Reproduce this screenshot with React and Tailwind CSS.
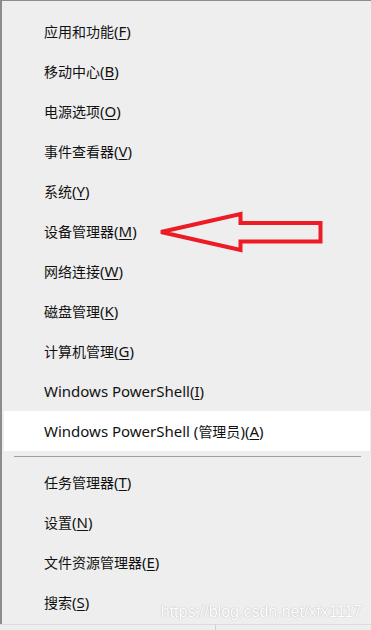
const groups = [
  [
    ['应用和功能', 'F'],
    ['移动中心', 'B'],
    ['电源选项', 'O'],
    ['事件查看器', 'V'],
    ['系统', 'Y'],
    ['设备管理器', 'M'],
    ['网络连接', 'W'],
    ['磁盘管理', 'K'],
    ['计算机管理', 'G'],
    ['Windows PowerShell', 'I'],
    ['Windows PowerShell (管理员)', 'A', true],
  ],
  [
    ['任务管理器', 'T'],
    ['设置', 'N'],
    ['文件资源管理器', 'E'],
    ['搜索', 'S'],
  ],
]

// CJK runs stay at 14px, latin runs are drawn a bit larger like Segoe UI
function Label({ text }) {
  return text.split(/([\u4e00-\u9fff]+)/).filter(Boolean).map((part, i) =>
    /[\u4e00-\u9fff]/.test(part)
      ? <span key={i} className="text-[14px]">{part}</span>
      : <span key={i} className="text-[15px]">{part}</span>
  )
}

function MenuItem({ label, hotkey, active }) {
  return (
    <div className={`h-10 flex items-center pl-10 mr-px ${active ? 'bg-white' : ''}`}>
      <span>
        <Label text={label} />
        <span className="text-[15px]">(<span className="underline underline-offset-2 decoration-1">{hotkey}</span>)</span>
      </span>
    </div>
  )
}

export default function App() {
  return (
    <div
      className="relative w-[371px] h-[630px] overflow-hidden bg-[#eeeeee] text-[#111] text-[14px]"
      style={{ fontFamily: '"Noto Sans", "Noto Sans CJK SC", sans-serif' }}
    >
      <div className="h-[624px] border-t border-l-2 border-[#8c8c8c] pt-[10px] pl-[2px]">
        {groups[0].map(([l, k, a]) => <MenuItem key={k} label={l} hotkey={k} active={a} />)}
        <div className="h-[11px] flex items-center pl-[10px] pr-[10px]">
          <div className="h-px w-full bg-[#a0a0a0]" />
        </div>
        {groups[1].map(([l, k]) => <MenuItem key={k} label={l} hotkey={k} />)}
      </div>
      <div className="h-[6px] border-t border-[#dcdcdc] flex">
        <div className="w-[216px] border-r border-[#d0d0d0]" />
      </div>

      {/* red arrow annotation */}
      <svg className="absolute left-0 top-0" width="371" height="630">
        <polygon
          points="161,232 240.5,214 240.5,223 320.5,223 320.5,241.5 240.5,241.5 240.5,250"
          fill="none"
          stroke="#ed1c24"
          strokeWidth="4"
          strokeLinejoin="miter"
          strokeMiterlimit="3"
        />
      </svg>

      {/* blog watermark */}
      <div
        className="absolute right-[9px] top-[600px] text-[16px] text-white [text-shadow:0_0_1px_#bdbdbd,0_0_1px_#bdbdbd]"
        style={{ fontFamily: '"Liberation Sans", Arial, sans-serif' }}
      >
        https://blog.csdn.net/xfx1117
      </div>
    </div>
  )
}
